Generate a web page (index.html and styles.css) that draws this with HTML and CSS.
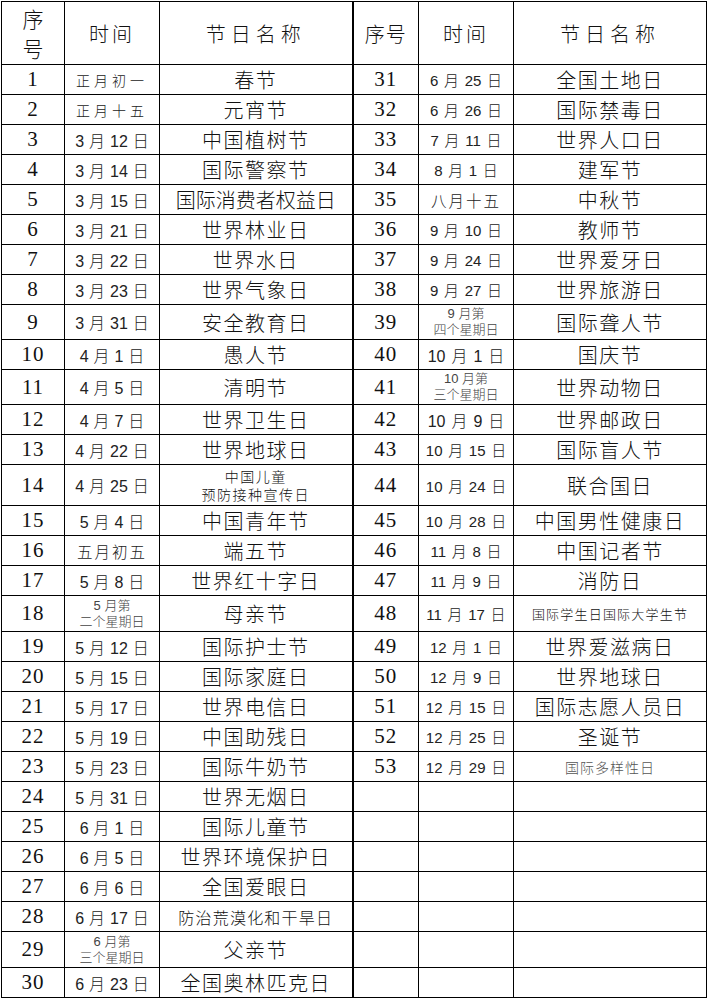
FILE: index.html
```html
<!DOCTYPE html>
<html lang="zh-CN">
<head>
<meta charset="utf-8">
<title>节日表</title>
<link rel="stylesheet" href="styles.css">
</head>
<body>
<table class="sheet">
  <colgroup>
    <col class="c-no"><col class="c-dt"><col class="c-nm">
    <col class="c-no2"><col class="c-dt"><col class="c-nm">
  </colgroup>
  <tr class="head">
    <td class="h-no">序<br>号</td><td class="h-dt">时间</td><td class="h-nm">节日名称</td>
    <td class="h-no2 split">序号</td><td class="h-dt">时间</td><td class="h-nm">节日名称</td>
  </tr>
  <tr><td class="no">1</td><td class="dt cn">正月初一</td><td class="nm">春节</td><td class="no split">31</td><td class="dt r">6 月 25 日</td><td class="nm">全国土地日</td></tr>
  <tr><td class="no">2</td><td class="dt cn">正月十五</td><td class="nm">元宵节</td><td class="no split">32</td><td class="dt r">6 月 26 日</td><td class="nm">国际禁毒日</td></tr>
  <tr><td class="no">3</td><td class="dt">3 月 12 日</td><td class="nm">中国植树节</td><td class="no split">33</td><td class="dt r">7 月 11 日</td><td class="nm">世界人口日</td></tr>
  <tr><td class="no">4</td><td class="dt">3 月 14 日</td><td class="nm">国际警察节</td><td class="no split">34</td><td class="dt r">8 月 1 日</td><td class="nm">建军节</td></tr>
  <tr><td class="no">5</td><td class="dt">3 月 15 日</td><td class="nm long">国际消费者权益日</td><td class="no split">35</td><td class="dt cn2">八月十五</td><td class="nm">中秋节</td></tr>
  <tr><td class="no">6</td><td class="dt">3 月 21 日</td><td class="nm">世界林业日</td><td class="no split">36</td><td class="dt r">9 月 10 日</td><td class="nm">教师节</td></tr>
  <tr><td class="no">7</td><td class="dt">3 月 22 日</td><td class="nm">世界水日</td><td class="no split">37</td><td class="dt r">9 月 24 日</td><td class="nm">世界爱牙日</td></tr>
  <tr><td class="no">8</td><td class="dt">3 月 23 日</td><td class="nm">世界气象日</td><td class="no split">38</td><td class="dt r">9 月 27 日</td><td class="nm">世界旅游日</td></tr>
  <tr class="t35"><td class="no">9</td><td class="dt">3 月 31 日</td><td class="nm">安全教育日</td><td class="no split">39</td><td class="dt2">9 月第<br>四个星期日</td><td class="nm">国际聋人节</td></tr>
  <tr><td class="no">10</td><td class="dt">4 月 1 日</td><td class="nm">愚人节</td><td class="no split">40</td><td class="dt r big">10 月 1 日</td><td class="nm">国庆节</td></tr>
  <tr class="t35"><td class="no">11</td><td class="dt">4 月 5 日</td><td class="nm">清明节</td><td class="no split">41</td><td class="dt2">10 月第<br>三个星期日</td><td class="nm">世界动物日</td></tr>
  <tr><td class="no">12</td><td class="dt">4 月 7 日</td><td class="nm">世界卫生日</td><td class="no split">42</td><td class="dt r big">10 月 9 日</td><td class="nm">世界邮政日</td></tr>
  <tr><td class="no">13</td><td class="dt">4 月 22 日</td><td class="nm">世界地球日</td><td class="no split">43</td><td class="dt r">10 月 15 日</td><td class="nm">国际盲人节</td></tr>
  <tr class="t41"><td class="no">14</td><td class="dt">4 月 25 日</td><td class="nm two">中国儿童<br>预防接种宣传日</td><td class="no split">44</td><td class="dt r">10 月 24 日</td><td class="nm">联合国日</td></tr>
  <tr><td class="no">15</td><td class="dt">5 月 4 日</td><td class="nm">中国青年节</td><td class="no split">45</td><td class="dt r">10 月 28 日</td><td class="nm">中国男性健康日</td></tr>
  <tr><td class="no">16</td><td class="dt cn2">五月初五</td><td class="nm">端五节</td><td class="no split">46</td><td class="dt r">11 月 8 日</td><td class="nm">中国记者节</td></tr>
  <tr><td class="no">17</td><td class="dt">5 月 8 日</td><td class="nm">世界红十字日</td><td class="no split">47</td><td class="dt r">11 月 9 日</td><td class="nm">消防日</td></tr>
  <tr class="t36"><td class="no">18</td><td class="dt2">5 月第<br>二个星期日</td><td class="nm">母亲节</td><td class="no split">48</td><td class="dt r">11 月 17 日</td><td class="nm tiny">国际学生日国际大学生节</td></tr>
  <tr><td class="no">19</td><td class="dt">5 月 12 日</td><td class="nm">国际护士节</td><td class="no split">49</td><td class="dt r">12 月 1 日</td><td class="nm">世界爱滋病日</td></tr>
  <tr><td class="no">20</td><td class="dt">5 月 15 日</td><td class="nm">国际家庭日</td><td class="no split">50</td><td class="dt r">12 月 9 日</td><td class="nm">世界地球日</td></tr>
  <tr><td class="no">21</td><td class="dt">5 月 17 日</td><td class="nm">世界电信日</td><td class="no split">51</td><td class="dt r">12 月 15 日</td><td class="nm">国际志愿人员日</td></tr>
  <tr><td class="no">22</td><td class="dt">5 月 19 日</td><td class="nm">中国助残日</td><td class="no split">52</td><td class="dt r">12 月 25 日</td><td class="nm">圣诞节</td></tr>
  <tr><td class="no">23</td><td class="dt">5 月 23 日</td><td class="nm">国际牛奶节</td><td class="no split">53</td><td class="dt r">12 月 29 日</td><td class="nm small grey">国际多样性日</td></tr>
  <tr><td class="no">24</td><td class="dt">5 月 31 日</td><td class="nm">世界无烟日</td><td class="no split"></td><td></td><td></td></tr>
  <tr><td class="no">25</td><td class="dt">6 月 1 日</td><td class="nm">国际儿童节</td><td class="no split"></td><td></td><td></td></tr>
  <tr><td class="no">26</td><td class="dt">6 月 5 日</td><td class="nm">世界环境保护日</td><td class="no split"></td><td></td><td></td></tr>
  <tr><td class="no">27</td><td class="dt">6 月 6 日</td><td class="nm">全国爱眼日</td><td class="no split"></td><td></td><td></td></tr>
  <tr><td class="no">28</td><td class="dt">6 月 17 日</td><td class="nm mid">防治荒漠化和干旱日</td><td class="no split"></td><td></td><td></td></tr>
  <tr class="t36"><td class="no">29</td><td class="dt2">6 月第<br>三个星期日</td><td class="nm">父亲节</td><td class="no split"></td><td></td><td></td></tr>
  <tr><td class="no">30</td><td class="dt">6 月 23 日</td><td class="nm">全国奥林匹克日</td><td class="no split"></td><td></td><td></td></tr>
</table>
</body>
</html>
```
FILE: styles.css
```css
html, body {
  margin: 0;
  padding: 0;
  background: #ffffff;
}
body {
  padding: 1px 0 0 1px;
  color: #111;
  font-family: "Noto Sans CJK SC", sans-serif;
}
.sheet {
  border-collapse: collapse;
  table-layout: fixed;
  width: 706px;
}
.c-no { width: 63px; }
.c-no2 { width: 66px; }
.c-dt { width: 95px; }
.c-nm { width: 193px; }
.sheet td {
  border: 1px solid #000;
  padding: 0;
  height: 29px;
  text-align: center;
  vertical-align: middle;
  white-space: nowrap;
  overflow: hidden;
}
.sheet td.split {
  border-left: 2px solid #000;
}
.sheet tr.head td {
  height: 62px;
  font-weight: 300;
}
.h-no {
  font-size: 21px;
  line-height: 30px;
}
.h-dt {
  font-size: 20px;
  letter-spacing: 3px;
}
.h-no2 {
  font-size: 20px;
  letter-spacing: 1px;
}
.h-nm {
  font-size: 20px;
  letter-spacing: 5px;
}
.sheet tr.t35 td { height: 34px; }
.sheet tr.t36 td { height: 35px; }
.sheet tr.t41 td { height: 40px; }
.no {
  font-family: "Liberation Serif", serif;
  font-size: 21px;
  letter-spacing: 1px;
}
.dt {
  font-family: "Liberation Sans", "Noto Sans CJK SC", sans-serif;
  font-size: 16px;
  font-weight: 300;
  color: #222;
  word-spacing: 0.5px;
}
.dt.r {
  font-size: 15px;
  word-spacing: 1.5px;
}
.dt.r.big {
  font-size: 16px;
}
.dt.cn {
  font-family: "Noto Sans CJK SC", sans-serif;
  font-size: 14px;
  letter-spacing: 4px;
}
.dt.cn2 {
  font-family: "Noto Sans CJK SC", sans-serif;
  font-size: 15.5px;
  letter-spacing: 2px;
}
.dt2 {
  font-family: "Liberation Sans", "Noto Sans CJK SC", sans-serif;
  font-size: 13px;
  line-height: 16px;
  font-weight: 300;
  color: #444;
}
.nm {
  font-size: 20px;
  letter-spacing: 1.5px;
  font-weight: 300;
}
.nm.long {
  letter-spacing: 0;
}
.nm.two {
  font-size: 14px;
  line-height: 18px;
  letter-spacing: 1.5px;
}
.nm.mid {
  font-size: 16px;
  letter-spacing: 1.2px;
}
.nm.tiny {
  font-size: 13px;
  letter-spacing: 1.2px;
}
.nm.small {
  font-size: 14px;
  letter-spacing: 1px;
}
.grey {
  color: #555;
}
```
